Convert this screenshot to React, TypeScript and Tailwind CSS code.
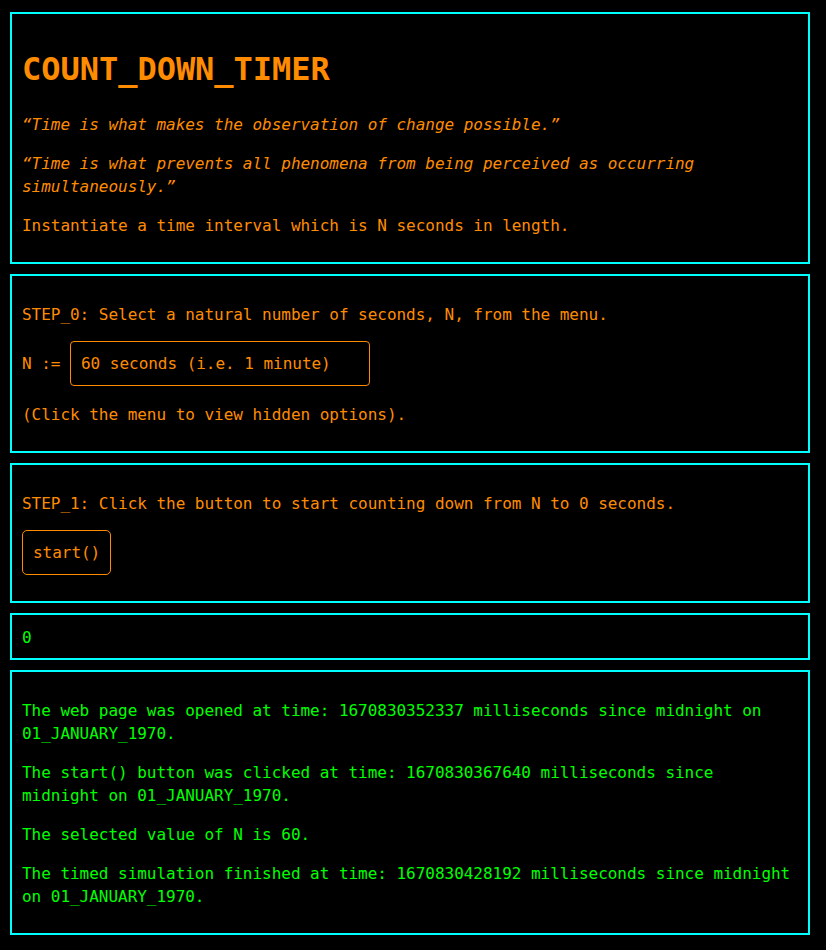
import { useState } from "react";

const mono = "font-['DejaVu_Sans_Mono',monospace]";

function Panel({ children, className = "" }: { children: React.ReactNode; className?: string }) {
  return (
    <div className={`w-[800px] border-2 border-[#00ffff] px-[10px] pt-[11px] pb-[9px] ${className}`}>{children}</div>
  );
}

export default function App() {
  const [seconds, setSeconds] = useState("60");

  return (
    <div className={`min-h-screen bg-black ${mono} text-[16px] leading-[23px] tracking-[-0.03px]`}>
      <div className="flex flex-col gap-[10px] px-[10px] pt-[12px] pb-[14px]">
        <Panel className="text-[#ff8c00]">
          <h1 className="mt-[26px] mb-[25px] text-[32px] font-bold leading-[37px]">COUNT_DOWN_TIMER</h1>
          <p className="mb-4 italic">“Time is what makes the observation of change possible.”</p>
          <p className="my-4 italic">
            “Time is what prevents all phenomena from being perceived as occurring simultaneously.”
          </p>
          <p className="my-4">Instantiate a time interval which is N seconds in length.</p>
        </Panel>

        <Panel className="text-[#ff8c00]">
          <p className="mt-4 mb-[15px]">STEP_0: Select a natural number of seconds, N, from the menu.</p>
          <p className="mb-[17px] flex items-center">
            <span className="whitespace-pre">N := </span>
            <select
              value={seconds}
              onChange={(e) => setSeconds(e.target.value)}
              className="h-[45px] w-[300px] appearance-none rounded-[4px] border border-[#ff8c00] bg-black px-[10px] text-[16px] text-[#ff8c00] outline-none"
            >
              <option value="60">60 seconds (i.e. 1 minute)</option>
              <option value="300">300 seconds (i.e. 5 minutes)</option>
              <option value="600">600 seconds (i.e. 10 minutes)</option>
            </select>
          </p>
          <p className="mb-4">(Click the menu to view hidden options).</p>
        </Panel>

        <Panel className="text-[#ff8c00]">
          <p className="mt-4 mb-[15px]">STEP_1: Click the button to start counting down from N to 0 seconds.</p>
          <p className="mb-[17px]">
            <button className="h-[45px] rounded-[5px] border border-[#ff8c00] bg-black px-[10px] text-[16px] text-[#ff8c00]">
              start()
            </button>
          </p>
        </Panel>

        <Panel className="text-[#00ff00]">0</Panel>

        <Panel className="text-[#00ff00]">
          <p className="my-4">
            The web page was opened at time: 1670830352337 milliseconds since midnight on 01_JANUARY_1970.
          </p>
          <p className="my-4">
            The start() button was clicked at time: 1670830367640 milliseconds since midnight on 01_JANUARY_1970.
          </p>
          <p className="my-4">The selected value of N is {seconds}.</p>
          <p className="my-4">
            The timed simulation finished at time: 1670830428192 milliseconds since midnight on 01_JANUARY_1970.
          </p>
        </Panel>
      </div>
    </div>
  );
}
